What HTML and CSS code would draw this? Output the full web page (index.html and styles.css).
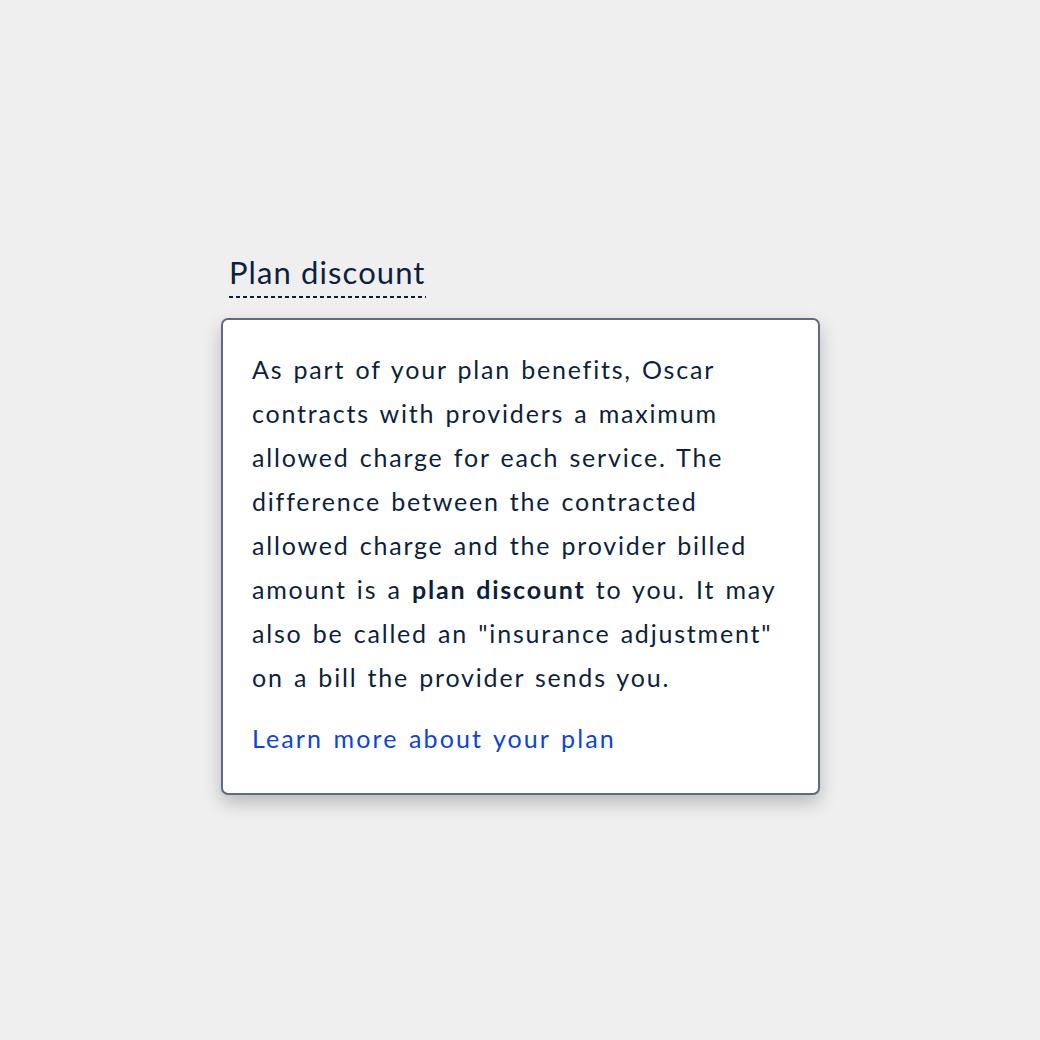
FILE: index.html
```html
<!DOCTYPE html>
<html>
<head>
<meta charset="utf-8">
<link rel="stylesheet" href="styles.css">
</head>
<body>
<div class="stage">
  <div class="term">Plan discount</div>
  <div class="tooltip">
    <p class="body">As part of your plan benefits, Oscar contracts with providers a maximum allowed charge for each service. The difference between the contracted allowed charge and the provider billed amount is a <strong>plan discount</strong> to you. It may also be called an "insurance adjustment" on a bill the provider sends you.</p>
    <a class="link" href="#">Learn more about your plan</a>
  </div>
</div>
</body>
</html>
```
FILE: styles.css
```css
html, body {
  margin: 0;
  padding: 0;
  background: #efefef;
  width: 1040px;
  height: 1040px;
}
body {
  font-family: Lato, "Noto Sans", sans-serif;
  color: #0c1f3d;
}
.stage {
  padding: 254px 0 0 221px;
  display: flex;
  flex-direction: column;
  align-items: flex-start;
}
.term {
  margin-left: 8px;
  font-size: 31px;
  line-height: 36px;
  letter-spacing: 1.1px;
  background-image: repeating-linear-gradient(to right, #0c1f3d 0 4px, transparent 4px 7px);
  background-size: 198px 2px;
  background-repeat: no-repeat;
  background-position: left bottom;
  height: 36px;
  padding-bottom: 8px;
}
.tooltip {
  margin-top: 20px;
  box-sizing: border-box;
  width: 599px;
  background: #fff;
  border: 2px solid #5d6b7f;
  border-radius: 7px;
  box-shadow: 0 8px 18px rgba(0,0,0,0.22);
  padding: 27px 30px 39px 29px;
}
.body {
  margin: 0;
  font-size: 25px;
  line-height: 44px;
  letter-spacing: 1.8px;
  word-spacing: 2px;
  width: 532px;
}
.body strong {
  font-weight: 700;
}
.link {
  display: block;
  margin-top: 23px;
  font-size: 25px;
  line-height: 32px;
  color: #0b43e0;
  text-decoration: none;
  letter-spacing: 2.1px;
  word-spacing: 2px;
}
```
